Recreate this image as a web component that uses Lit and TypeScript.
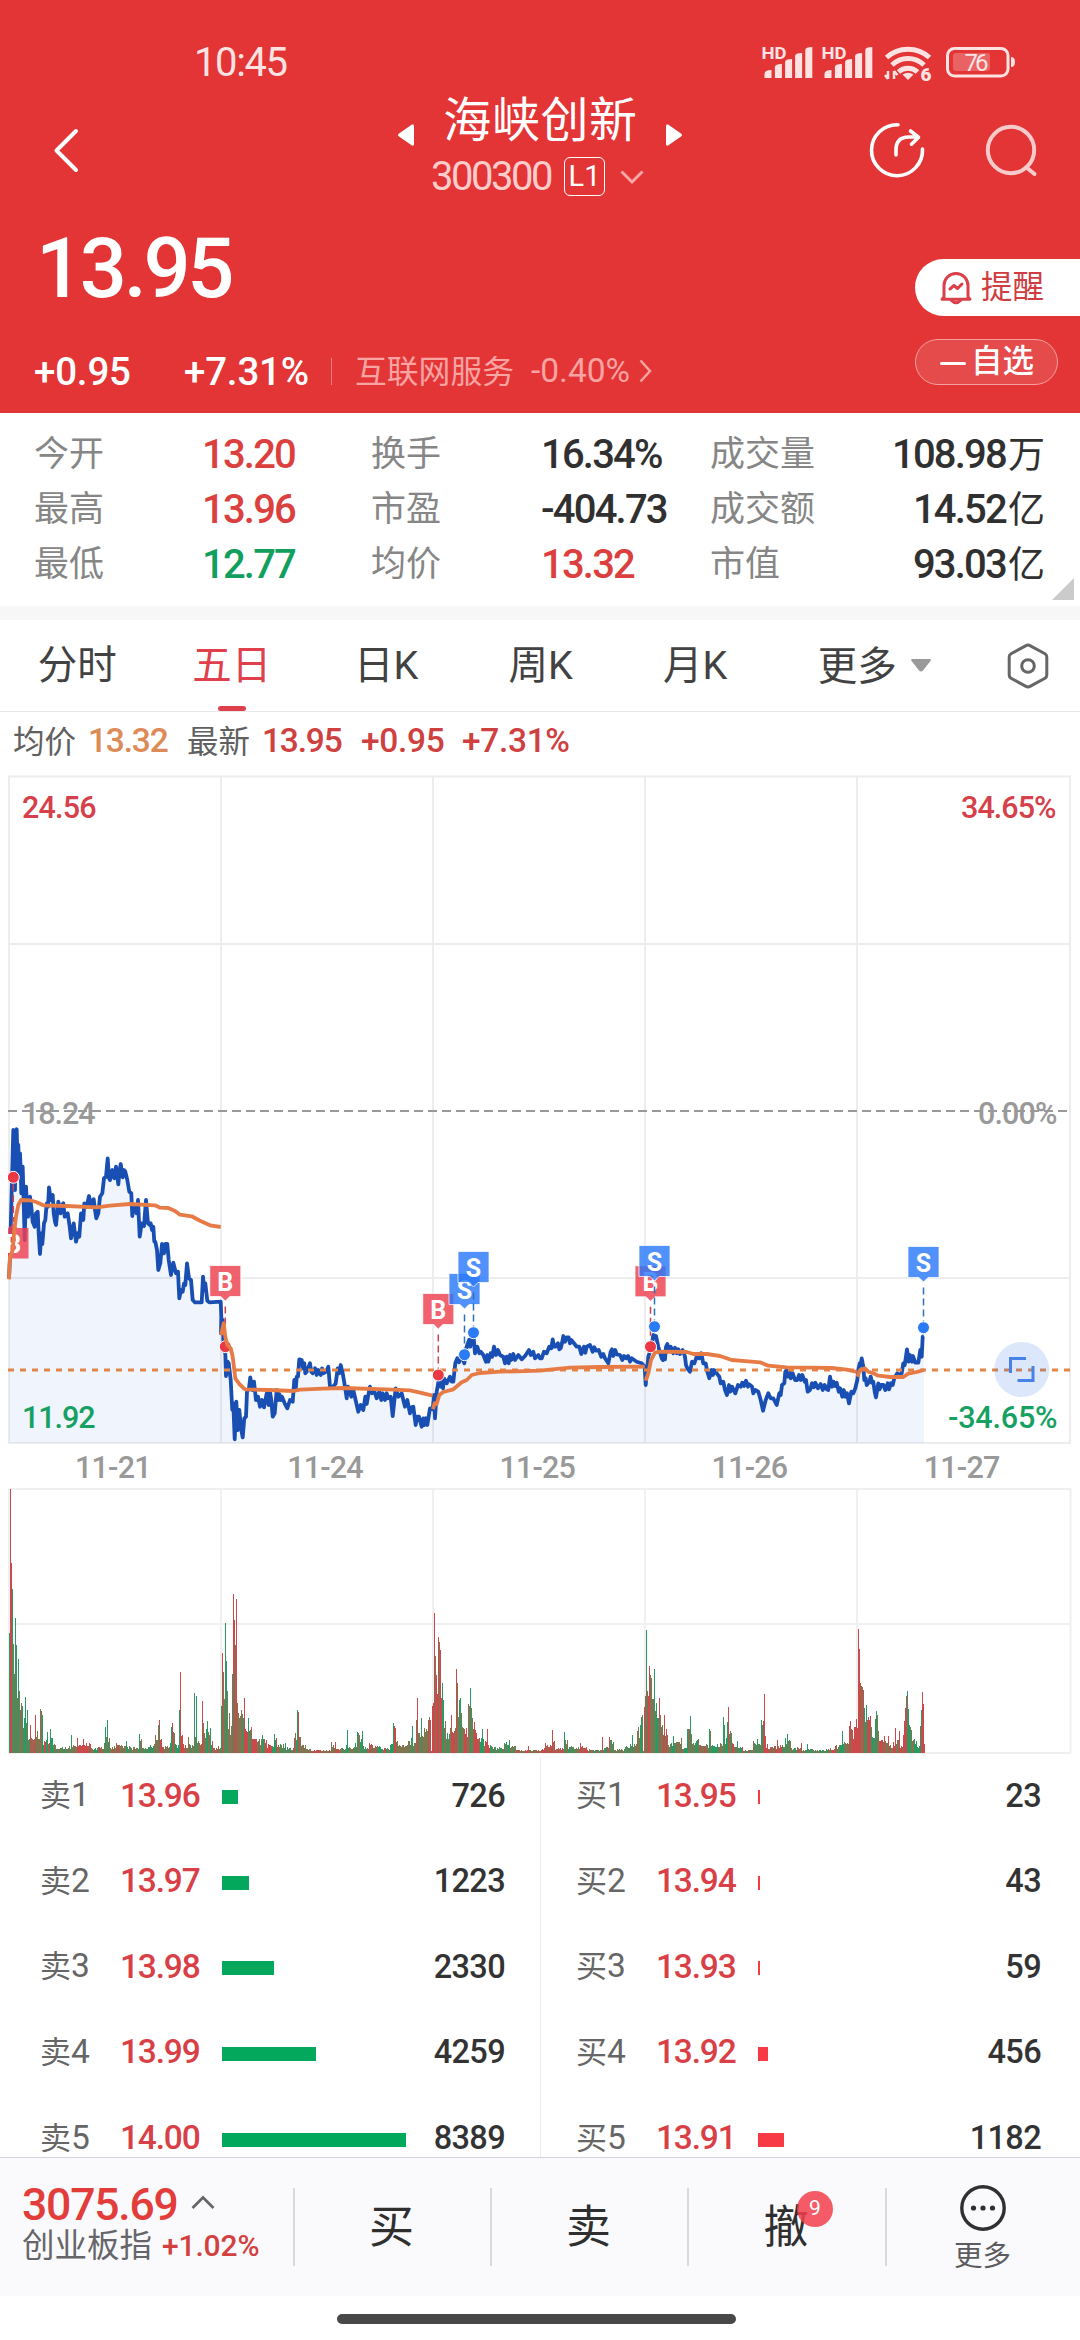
import { LitElement, html, svg, css } from "lit";
import { customElement } from "lit/decorators.js";

type Tone = "up" | "down" | "flat";

const STATS: [string, string, Tone][][] = [
  [["今开", "13.20", "up"], ["换手", "16.34%", "flat"], ["成交量", "108.98万", "flat"]],
  [["最高", "13.96", "up"], ["市盈", "-404.73", "flat"], ["成交额", "14.52亿", "flat"]],
  [["最低", "12.77", "down"], ["均价", "13.32", "up"], ["市值", "93.03亿", "flat"]],
];

const ASKS: [string, string, string, number][] = [
  ["卖1", "13.96", "726", 16],
  ["卖2", "13.97", "1223", 27],
  ["卖3", "13.98", "2330", 52],
  ["卖4", "13.99", "4259", 94],
  ["卖5", "14.00", "8389", 184],
];
const BIDS: [string, string, string, number][] = [
  ["买1", "13.95", "23", 2],
  ["买2", "13.94", "43", 2],
  ["买3", "13.93", "59", 2],
  ["买4", "13.92", "456", 10],
  ["买5", "13.91", "1182", 26],
];

// Curve samples are stored in thirds of a pixel, relative to an origin.
type Chunk = [number, number, string];
const toPoints = (chunks: Chunk[]) =>
  chunks
    .flatMap(([ox, oy, s]) =>
      s.trim().split(/\s+/).map((p) => {
        const [x, y] = p.split(",").map(Number);
        return `${(ox + x / 3).toFixed(1)},${(oy + y / 3).toFixed(1)}`;
      })
    )
    .join(" ");

const PRICE = toPoints([
  [0, 1090, `27,565 30,500 33,380 40,120 45,300 47,130 50,118 52,190 55,165 57,250 60,190 62,240 64,310 68,230 71,340 74,450 78,290 81,350 84,380 90,320 94,350 98,395 104,410 108,370 113,365 116,430 120,492 124,430 127,462 132,400 136,390 140,340 144,350 147,292 152,330 158,315 161,370 165,395 168,405 175,335 182,370 186,345 190,340 194,380 203,370 209,410 213,445 221,400 228,455 234,430 238,440 243,370 250,390 253,340 260,350 267,318 273,345 281,328 285,360 289,385 295,370 300,320 307,310 312,265 318,260 323,205 327,265 330,270 337,240 343,265 348,230 352,260 355,283 359,240 362,222 368,262 372,240 376,245 382,270 388,305 394,310 397,378 402,345 407,355 410,370 414,330 419,440 425,400 432,408 438,330 444,400 449,405 452,400 456,420 460,410 463,455 466,455 471,480 475,540 481,520 486,462 492,490 496,462 502,462 506,510 513,555 520,518 528,550 534,545 538,625 543,600 548,605 552,580 556,585 561,520 567,565 573,570 578,630 585,637 605,637 609,560 613,600 616,580 622,632 628,637 662,635 664,680 663,730 668,690 671,780 676,790 678,858 683,815 686,820 692,870 697,960 700,940 704,1048 709,935 713,1020 718,960 723,1015 728,1042 733,985 738,980 741,905 747,895 751,862 757,900 762,875 768,930 774,920 780,950 786,930 792,952 800,910 806,945`],
  [270, 1200, `0,575 4,600 8,650 14,640 20,570 24,600 28,582 32,600 36,590 44,610 52,625 60,600 68,605 73,540 77,570 80,530 84,530 88,478 95,480 99,505 103,490 106,520 110,515 120,490 124,515 128,520 135,505 140,525 145,510 152,525 156,505 160,520 168,515 175,500 180,560 190,560 197,550 203,505 208,520 212,495 218,520 225,560 230,595 234,560 238,570 244,590 250,570 258,605 265,635 272,615 280,630 286,590 290,612 294,590 300,560 306,580 312,570 320,595 328,575 334,600 338,580 345,600 350,580 355,595 362,590 368,648 377,565 385,590 395,580 400,600 405,620 412,600 420,640 425,622 430,620 437,675 441,650 447,650 455,680 460,655 463,675 468,655 472,675 480,625 488,628 492,585 495,655 500,575 508,530 512,560 515,540 519,565 522,535 530,550 540,530 545,545 550,545 556,490 562,475 567,487 572,465 583,490 590,440 597,420 601,440 605,410 610,400 615,460 622,440 628,460 632,455 640,465 648,485 652,465 655,485 662,460 667,470 672,440 678,465 684,450 690,465 700,470 705,490 710,470 716,490 720,465 724,480 730,462 735,480 745,465 755,478 765,468 777,450 782,465 790,455 795,475 805,465`],
  [540, 1200, `0,475 5,475 12,455 20,460 28,440 34,445 38,418 42,440 46,440 54,430 58,448 62,445 66,430 70,408 75,425 80,412 86,412 90,430 94,420 102,430 110,440 118,440 124,462 132,440 136,458 140,440 150,435 158,455 163,442 168,452 176,450 184,470 190,462 195,475 205,490 212,455 216,448 220,468 226,450 230,463 240,465 247,480 252,468 258,475 264,468 270,485 275,475 290,485 305,490 314,500 317,555 325,470 335,440 340,405 348,408 355,440 365,475 369,480 372,455 375,478 378,440 382,432 387,450 392,440 400,460 405,443 410,460 415,448 420,462 428,450 435,470 438,495 442,505 450,515 456,485 463,490 470,470 478,475 484,460 490,490 497,490 502,515 508,535 515,510 519,525 522,510 530,520 538,530 542,550 550,545 555,570 561,585 567,555 571,575 576,560 586,580 594,555 602,560 607,548 612,558 618,542 624,560 628,553 636,560 640,580 646,570 655,575 662,600 669,632 677,600 685,580 692,595 700,595 710,615 718,580 722,585 726,555 733,550 736,515 740,510 744,530 748,510 752,535 758,520 765,540 772,540 777,525 782,540 787,525 794,545 798,540 803,575`],
  [810, 1200, `0,570 6,550 11,562 16,548 24,565 32,552 38,570 44,555 50,568 55,570 60,530 66,560 70,545 76,558 80,548 86,575 90,565 97,590 101,570 106,590 111,580 117,610 124,575 130,580 136,565 142,540 145,510 149,490 152,495 155,475 160,500 163,540 167,535 170,555 178,545 182,530 186,548 190,545 194,575 198,592 205,550 209,568 213,555 220,555 226,570 233,550 237,568 243,550 248,555 253,535 262,520 268,525 275,520 280,490 284,495 287,475 291,448 296,485 300,465 306,485 309,468 316,488 325,488 331,450 335,470 338,410 342,408`],
]);

const AVERAGES = [
  toPoints([[0, 1090, `27,568 30,500 38,480 42,430 48,380 55,345 63,330 90,331 110,337 130,346 200,348 290,352 330,347 390,342 465,346 480,353 505,354 525,363 540,374 575,379 600,392 630,406 662,411`]]),
  toPoints([
    [0, 1090, `663,735 671,700 676,740 682,765 692,775 698,800 706,865 718,882 735,898 806,900`],
    [270, 1200, `0,570 70,573 90,569 160,566 220,564 370,569 420,571 460,580 488,587`],
  ]),
  toPoints([
    [270, 1200, `489,628 494,610 500,612 508,585 520,576 550,568 575,547 590,540 605,525 630,519 690,515 740,514`],
    [540, 1200, `0,512 90,503 180,501 314,500`],
  ]),
  toPoints([
    [540, 1200, `317,542 325,520 333,480 345,458 360,455 440,456 460,462 500,462 540,468 575,480 625,484 660,487 685,497 740,502`],
    [810, 1200, `0,503 65,504 110,509 140,516`],
  ]),
  toPoints([[810, 1200, `142,530 150,510 165,505 175,515 190,520 205,527 240,531 280,531 295,521 320,516 342,510`]]),
];

// x of the dot, y of the dot, top of the tag
const TRADES: ["B" | "S", number, number, number][] = [
  ["B", 225.3, 1346.7, 1265.5],
  ["B", 438.3, 1375, 1293.5],
  ["S", 464.5, 1354.7, 1273.5],
  ["S", 473.5, 1332.7, 1251.5],
  ["B", 650.5, 1346.7, 1265.8],
  ["S", 654.5, 1326.7, 1245.5],
  ["S", 923.5, 1327.7, 1246.5],
];

// Volume samples: x:height, an r or g suffix marks a purely red or green bar.
const VOLUME = `9:120g 10:264r 11:190r 12:164g 13:109 14:79 15:135g 16:108g 17:55 18:94g 19:62 20:43 22:47g 24:35g 25:56g 26:30 27:43g 29:14 30:28r 32:14 35:38r 37:22 38:14 40:44 41:42 42:38g 44:12r 47:21g 49:10r 50:24g 52:15g 55:8 60:5g 65:6 71:18g 73:8 77:15r 80:8r 83:14r 86:10r 90:9r 95:5g 100:5r 104:10 105:26g 107:33g 109:15 112:6 116:10r 120:7 126:12g 130:6g 137:5 139:19g 141:14 145:5g 150:8g 155:18 158:28g 159:33r 161:14r 165:7 170:10g 171:26g 172:30r 174:20 178:8g 179:43g 180:81r 182:18r 185:8r 188:16 190:8g 194:60g 195:16 196:57g 198:12 201:9r 202:52r 203:30 204:20 207:32g 209:18 210:25g 212:12r 214:5r 218:7r
221:47g 222:100r 223:81 224:54 225:130g 226:92g 227:62 229:40 231:27 232:79g 233:159r 234:133r 235:108 236:154r 237:50 239:35 241:43 243:35g 244:55r 246:22r 248:35g 251:26r 254:14r 258:12r 262:18g 266:13r 270:8r 274:19g 276:15r 278:8 285:10g 290:5g 294:15r 295:20 297:43g 298:41r 300:16 305:8 310:4 320:3r 331:11 333:8 335:11r 340:4 346:8g 347:23g 349:6 355:10g 357:21g 359:18 362:22g 365:6g 369:10r 372:8r 380:6g 385:5r 390:8g 393:30g 395:25r 397:12 402:8 408:12 411:15g 412:27g 415:10 416:33 417:55r 419:20 421:35g 424:25 428:33r 430:33r 431:2r
432:47r 433:50r 434:140r 435:97 436:78r 437:59r 438:116r 439:111 440:103r 441:55r 442:70g 443:53g 445:32 447:20g 450:25 451:38r 453:20r 455:25 456:84r 457:70 459:53g 460:55g 461:40 463:25 466:25r 468:49 469:47 470:65g 471:45 472:35 474:31r 476:20r 479:15r 482:24g 485:12r 487:24r 490:8g 495:6 500:5g 504:10g 509:13g 515:7 525:3r 528:7r 535:3 542:4r 545:10r 551:7r 552:23r 554:12r 560:5r 564:21g 567:13 572:6g 580:10r 586:6r 595:3g 602:16r 605:5g 609:16r 611:13g 613:11g 617:4 625:6g 630:9g 632:18g 634:9 637:22 640:28g 641:36g 642:38 643:2
644:46r 645:57 646:123g 647:62r 648:57r 649:87r 650:78 651:75 652:54 653:54 654:84g 655:42 656:50g 658:35g 659:55r 660:38 662:28 664:38r 666:24r 667:18 671:10g 673:17g 675:10 677:11 681:15 684:5g 687:24g 688:24 689:24 690:37g 691:19 693:10 696:12g 698:14 700:8r 706:9 709:24g 710:22 713:7g 717:9g 720:10 723:36g 724:28g 726:15g 727:31g 728:46r 729:19 731:20g 733:9r 735:6 737:12g 742:6r 750:3g 753:12 757:14g 759:9g 761:33g 762:28g 763:32r 764:59r 765:17r 767:9r 770:6 777:13r 780:8r 785:15g 787:19g 790:12 795:5g 801:10r 803:3g 807:9g 812:4 820:3g 828:4r 835:7r 840:8g 842:22g 844:11 847:10 849:27r 850:32r 852:23r 855:26r
856:34r 857:25r 858:124r 859:104r 860:70r 861:67 862:66 863:63r 864:45g 865:31 866:48g 868:36r 870:37r 871:26g 873:15g 875:34g 876:42g 877:38 878:22 880:12r 884:17r 886:10 888:17r 890:8 893:11r 895:25r 897:13 899:22r 901:7r 903:18r 904:32r 905:45r 906:57r 907:62g 908:44g 909:28g 911:23g 913:13 916:12g 919:7g 920:27r 921:43g 922:61r 923:49r 924:9r`;

const VOLUME_COLORS: Record<string, string> = { r: "#cb484b", g: "#2b9a62", m: "#7f7550" };

const buildVolume = () => {
  const anchors = VOLUME.trim().split(/\s+/).map((s) => {
    const m = /^(\d+):(\d+)([rg]?)$/.exec(s)!;
    return { x: +m[1], h: +m[2], c: m[3] || "m" };
  });
  let seed = 7;
  const rand = () => (seed = (seed * 16807) % 2147483647) / 2147483647;
  const paths: Record<string, string> = { r: "", g: "", m: "" };
  const bar = (x: number, h: number, c: string) => {
    paths[c] += `M${x} ${(1753 - h).toFixed(1)}h1V1753h-1z`;
  };
  anchors.forEach((a, i) => {
    bar(a.x, a.h, a.c);
    const next = anchors[i + 1];
    if (!next) return;
    for (let x = a.x + 1; x < next.x; x++) {
      const low = Math.min(a.h, next.h, 60);
      const roll = rand();
      bar(x, Math.max(2, low * (0.6 + rand() * 0.6)), roll < 0.45 ? "m" : roll < 0.75 ? a.c : next.c);
    }
  });
  return paths;
};
const VOLUME_PATHS = buildVolume();

@customElement("app-root")
export class AppRoot extends LitElement {
  static styles = css`
    :host {
      display: flex;
      flex-direction: column;
      width: 1080px;
      height: 2340px;
      overflow: hidden;
      background: #fff;
      color: #333;
      font-family: Roboto, "Noto Sans CJK SC", sans-serif;
    }
    * { box-sizing: border-box; }
    svg { display: block; flex: none; }
    .num { font-weight: 500; letter-spacing: -0.035em; }
    .up { color: #db3f3e; }
    .down { color: #129f5e; }
    .flat { color: #303030; }

    .header {
      height: 413px;
      flex: none;
      background: #e33536;
      color: #fff;
      display: flex;
      flex-direction: column;
    }
    .status {
      height: 88px;
      display: flex;
      align-items: flex-start;
      justify-content: space-between;
      padding: 40px 61px 0 194px;
    }
    .clock { font-size: 40px; line-height: 46px; color: #ffe3e3; letter-spacing: -1.4px; }
    .nav {
      height: 124px;
      display: grid;
      grid-template-columns: 398px 284px 398px;
    }
    .back { padding: 38px 0 0 51px; }
    .tools { display: flex; gap: 58px; padding: 32px 0 0 186px; }
    .title-row { display: flex; align-items: center; justify-content: space-between; height: 60px; }
    .title { font-size: 48px; line-height: 60px; letter-spacing: 0.6px; padding: 5px 0 0 1px; }
    .arrow { padding-top: 34px; }
    .code-row { display: flex; align-items: center; padding: 1px 0 0 33px; height: 56px; color: #ffcccc; }
    .code { font-size: 40px; line-height: 46px; letter-spacing: -2.5px; width: 133px; }
    .level {
      width: 41px;
      height: 39px;
      border: 1.5px solid #fff;
      border-radius: 6px;
      color: #fff;
      font-size: 29px;
      line-height: 36px;
      text-align: center;
      margin-right: 15px;
    }
    .quote { display: flex; justify-content: space-between; flex: 1; }
    .quote-left { display: flex; flex-direction: column; padding-left: 34px; }
    .price { font-size: 83px; line-height: 100px; padding: 7px 0 0 2px; letter-spacing: -0.04em; }
    .changes { display: flex; align-items: center; height: 60px; margin-top: 22px; }
    .delta { font-size: 38.5px; width: 150px; white-space: nowrap; letter-spacing: -0.005em; }
    .delta.pct { width: 147px; }
    .bar-sep { width: 1px; height: 27px; background: #f08080; margin-right: 23px; }
    .sector { font-size: 31.8px; color: #f9a3a3; width: 176px; white-space: nowrap; padding-bottom: 5px; }
    .sector-pct { font-size: 33.5px; color: #f9a3a3; width: 108px; letter-spacing: 0; padding-bottom: 1px; }
    .quote-right { display: flex; flex-direction: column; align-items: flex-start; width: 165px; padding-top: 47px; gap: 23px; }
    .remind {
      width: 165px;
      height: 57px;
      background: #fff;
      border-radius: 29px 0 0 29px;
      color: #cf3d42;
      font-size: 31.5px;
      line-height: 57px;
      display: flex;
      align-items: center;
      padding-left: 25px;
      gap: 9px;
    }
    .watch {
      width: 143px;
      height: 46px;
      border: 1px solid #f4a0a0;
      border-radius: 23px;
      background: #e64b4c;
      font-size: 31.5px;
      line-height: 43px;
      font-weight: 500;
      display: flex;
      padding-left: 24px;
      gap: 5px;
    }
    .minus { width: 26px; height: 3px; border-radius: 2px; background: #fff; margin-top: 22px; }

    .stats {
      position: relative;
      height: 193px;
      flex: none;
      padding: 14px 0 0 34px;
      display: grid;
      grid-template-columns: 168px 169px 170px 169px 335px;
      grid-template-rows: repeat(3, 55px);
      line-height: 55px;
    }
    .label { color: #868686; font-size: 35px; }
    .value { font-size: 40px; white-space: nowrap; }
    .value.num { letter-spacing: -0.045em; }
    .value.end { grid-column: 5; }
    .unit { font-size: 37px; font-weight: 400; letter-spacing: 0; padding-left: 2px; }
    .fold { position: absolute; right: 6px; bottom: 6px; }
    .stat-end { display: flex; justify-content: space-between; }

    .band { height: 14px; background: #f7f7f7; flex: none; }

    .tabs { height: 92px; flex: none; display: flex; border-bottom: 1.5px solid #e8e8e8; color: #424242; font-size: 39.5px; }
    .tab { width: 154.7px; display: flex; flex-direction: column; align-items: center; line-height: 86px; white-space: nowrap; }
    .tab span { height: 86px; padding-top: 3px; }
    .tab.active { color: #df404b; }
    .mark { width: 28px; height: 5px; border-radius: 3px; background: #df404b; }
    .tab.more { width: 204px; flex-direction: row; align-items: center; justify-content: center; gap: 14px; }
    .tab.more span { padding-top: 1px; }
    .tab.gear { width: 104px; flex-direction: row; justify-content: center; height: 91px; }

    .legend { height: 60px; flex: none; display: flex; align-items: center; padding: 0 0 3px 13px; font-size: 31.5px; color: #606060; }
    .legend .num { font-size: 33.5px; color: #cf4040; white-space: nowrap; }
    .legend .l1, .legend .l2 { width: 75px; padding-bottom: 4px; }
    .legend .n1 { width: 99px; color: #dc8a58; }
    .legend .n2 { width: 99px; }
    .legend .n3 { width: 101px; }
    .legend .wide { letter-spacing: -0.01em; }

    .axis { font-size: 30.5px; font-weight: 500; letter-spacing: -0.5px; }
    .tag { font-size: 25px; font-weight: 700; fill: #fff; text-anchor: middle; }

    .book { flex: 1; min-height: 0; display: grid; grid-template-columns: 540px 540px; overflow: hidden; }
    .side { display: flex; flex-direction: column; }
    .side.bids { border-left: 1.5px solid #ececec; }
    .level-row { height: 85.6px; flex: none; display: flex; align-items: center; line-height: 36px; }
    .asks .level-row { padding: 0 35px 0 40px; }
    .bids .level-row { padding: 0 39px 0 35px; }
    .side .level-row:first-child { height: 81.5px; padding-bottom: 4.5px; }
    .lv { font-size: 31px; color: #666; width: 80px; white-space: nowrap; }
    .lv b { font-weight: 400; font-size: 33.5px; }
    .px { font-size: 33.5px; color: #d93f46; width: 102px; }
    .depth { height: 14px; background: #03a85c; margin-top: 3px; }
    .bids .depth { background: #f73a44; }
    .qty { margin-left: auto; font-size: 32.5px; letter-spacing: -0.02em; }

    .dock {
      height: 139px;
      flex: none;
      background: #fafafc;
      border-top: 1.5px solid #d4d4d8;
      display: grid;
      grid-template-columns: 293px 197px 197px 198px 195px;
    }
    .index { padding: 22px 0 0 22px; }
    .index-top { display: flex; align-items: center; height: 50px; gap: 13px; }
    .index-value { font-size: 44.5px; line-height: 50px; color: #e23d3a; letter-spacing: -0.027em; }
    .index-bottom { display: flex; align-items: center; height: 32px; line-height: 28px; gap: 10px; font-size: 32.5px; color: #66666a; white-space: nowrap; }
    .index-bottom .num { font-size: 30px; color: #d2413f; letter-spacing: -0.005em; }
    .action { position: relative; display: flex; justify-content: center; font-size: 45px; line-height: 140px; color: #2f2f2f; }
    .action::before { content: ""; position: absolute; left: 0; top: 30px; width: 2px; height: 78px; background: #d9d9dd; }
    .action.last { flex-direction: column; align-items: center; justify-content: flex-start; padding-top: 26px; gap: 6px; font-size: 28.5px; line-height: 37px; color: #5c5c5e; }
    .badge {
      position: absolute;
      left: 110px;
      top: 33px;
      width: 36px;
      height: 36px;
      border-radius: 50%;
      background: rgba(243, 62, 76, 0.85);
      color: #fff;
      font-size: 21px;
      line-height: 35px;
      text-align: center;
    }
    .home { height: 44px; flex: none; display: flex; justify-content: center; align-items: flex-start; padding: 18px 7px 0 0; }
    .pill { width: 399px; height: 10px; border-radius: 5px; background: #484848; }
  `;

  private signal(x: number) {
    return svg`
      <text x=${x - 3} y="58.500" font-size="16" font-weight="700" textLength="25" lengthAdjust="spacingAndGlyphs">HD</text>
      <path d=${`M${x} 78v-4q0-4 7-4v8zM${x + 10.4} 78V67q0-3 7-3v14zM${x + 20.6} 78V62q0-3 7-3v19zM${x + 30.6} 78V56q0-3 7-3v25zM${x + 40.8} 78V50q0-3 7-3v31z`}></path>`;
  }

  private statusIcons() {
    return html`<svg width="259" height="44" viewBox="760 40 259 44" fill="#ffe3e3">
      ${this.signal(764.5)} ${this.signal(824.5)}
      <g fill="none" stroke="#ffe3e3" stroke-width="5">
        <path d="M886.5 57.5a32 32 0 0 1 43 0"></path>
        <path d="M892 65a23 23 0 0 1 32 0"></path>
        <path d="M898.5 72a14 14 0 0 1 19 0"></path>
      </g>
      <path d="M902.5 74.5q5.500-3.500 11 0L908 80z"></path>
      <path d="M888 71v8m0 0l-3-4m9 4v-8m0 0l3.500 4" stroke="#ffe3e3" stroke-width="2.500" fill="none"></path>
      <text x="920.5" y="81" font-size="19" font-weight="900">6</text>
      <rect x="947.5" y="48.500" width="60.500" height="27.500" rx="7" fill="none" stroke="#ffe3e3" stroke-width="3"></rect>
      <path d="M1011 57q4 0 4 5t-4 5z"></path>
      <rect x="953" y="53" width="37" height="18" rx="3" opacity=".27"></rect>
      <text x="964.500" y="71" font-size="24" textLength="24">76</text>
    </svg>`;
  }

  private header() {
    return html`<header class="header">
      <div class="status"><span class="clock">10:45</span>${this.statusIcons()}</div>
      <div class="nav">
        <div class="back">
          <svg width="30" height="48" viewBox="0 0 30 48" fill="none" stroke="#fff" stroke-width="4" stroke-linecap="round" stroke-linejoin="round"><path d="M25 5L5.500 24.500L25 44"></path></svg>
        </div>
        <div>
          <div class="title-row">
            <svg class="arrow" width="16" height="56" viewBox="0 0 16 22"><path d="M16 1.500V20.500Q16 22 14 21.500L1 12.500Q-1 11 1 9.500L14 .5Q16 0 16 1.500z" fill="#fff"></path></svg>
            <span class="title">海峡创新</span>
            <svg class="arrow" width="16" height="56" viewBox="0 0 16 22"><path d="M0 1.500V20.500Q0 22 2 21.500L15 12.500Q17 11 15 9.500L2 .5Q0 0 0 1.500z" fill="#fff"></path></svg>
          </div>
          <div class="code-row">
            <span class="code">300300</span><span class="level">L1</span>
            <svg width="24" height="16" viewBox="0 0 24 16" fill="none" stroke="#f7a6a6" stroke-width="3"><path d="M1.500 2.500L12 13L22.500 2.500"></path></svg>
          </div>
        </div>
        <div class="tools">
          <svg width="58" height="60" viewBox="868 120 58 60" fill="none" stroke="#fff" stroke-width="3.600" stroke-linecap="round" stroke-linejoin="round">
            <path d="M898 124.700A25.500 25.500 0 1 0 922.500 149"></path>
            <path d="M896 155v-5q0-13 13-13h9M910.500 131l8 6.200l-7 7"></path>
          </svg>
          <svg width="56" height="60" viewBox="982 120 56 60" fill="none" stroke="#f7cbcb" stroke-width="4" stroke-linecap="round">
            <circle cx="1009" cy="150" r="23.200"></circle><path d="M1024.500 167.500l8 6.500"></path>
          </svg>
        </div>
      </div>
      <div class="quote">
        <div class="quote-left">
          <div class="price num">13.95</div>
          <div class="changes">
            <span class="delta num">+0.95</span><span class="delta pct num">+7.31%</span>
            <i class="bar-sep"></i>
            <span class="sector">互联网服务</span><span class="sector-pct">-0.40%</span>
            <svg width="13" height="24" viewBox="0 0 13 24" fill="none" stroke="#f9a3a3" stroke-width="2.500"><path d="M1.500 1.500L11 12L1.500 22.500"></path></svg>
          </div>
        </div>
        <div class="quote-right">
          <div class="remind">
            <svg width="32" height="34" viewBox="0 0 32 34" fill="none" stroke="#d9404a" stroke-width="3" stroke-linejoin="round" stroke-linecap="round">
              <path d="M4 26V14.500a12 12 0 0 1 24 0V26l2 2.200H2z"></path>
              <path d="M10 18l4-3.500l3.500 3l4.500-4.500"></path>
              <path d="M11.500 29.500q4.500 4.500 9 0"></path>
            </svg>提醒
          </div>
          <div class="watch"><i class="minus"></i>自选</div>
        </div>
      </div>
    </header>`;
  }

  private stats() {
    return html`<section class="stats">
      ${STATS.map((row) => row.map(([label, value, tone], i) => {
        if (i < 2) return html`<span class="label">${label}</span><span class="value num ${tone}">${value}</span>`;
        return html`<div class="value end stat-end"><span class="label">${label}</span><span class="value num ${tone}">${value.slice(0, -1)}<span class="unit">${value.slice(-1)}</span></span></div>`;
      }))}
      <svg class="fold" width="22" height="22" viewBox="0 0 22 22"><path d="M22 0V22H0z" fill="#cbcbcb"></path></svg>
    </section>`;
  }

  private tabs() {
    return html`<nav class="tabs">
      <div class="tab"><span>分时</span></div>
      <div class="tab active"><span>五日</span><i class="mark"></i></div>
      <div class="tab"><span>日K</span></div>
      <div class="tab"><span>周K</span></div>
      <div class="tab"><span>月K</span></div>
      <div class="tab more"><span>更多</span><svg width="20" height="13" viewBox="0 0 20 13"><path d="M1 0H19Q20.500.5 19.500 2L12 11.500Q10 13.500 8 11.500L.5 2Q-.5.5 1 0z" fill="#9a9a9a"></path></svg></div>
      <div class="tab gear">
        <svg width="42" height="46" viewBox="0 0 42 46" fill="none" stroke="#666" stroke-width="3" stroke-linejoin="round">
          <path d="M19 2.600Q21 1.500 23 2.600L38 10.800Q39.800 12 39.800 14V32Q39.800 34 38 35.200L23 43.400Q21 44.500 19 43.400L4 35.200Q2.200 34 2.200 32V14Q2.200 12 4 10.800z"></path>
          <circle cx="21" cy="23" r="6.300"></circle>
        </svg>
      </div>
    </nav>`;
  }

  private legend() {
    return html`<div class="legend">
      <span class="l1">均价</span><span class="num n1">13.32</span>
      <span class="l2">最新</span><span class="num n2">13.95</span><span class="num n3 wide">+0.95</span><span class="num wide">+7.31%</span>
    </div>`;
  }

  private trade([side, x, y, top]: ["B" | "S", number, number, number]) {
    const buy = side === "B";
    const main = buy ? "#ea3845" : "#2a7bf4";
    const line = buy ? "#c8434c" : "#2d72b8";
    return svg`
      <line x1=${x} x2=${x} y1=${top + 41} y2=${y - 6} stroke=${line} stroke-width="1.500" stroke-dasharray="7 4"></line>
      <circle cx=${x} cy=${y} r="6" fill=${main} stroke="#fff" stroke-width="1"></circle>
      <path d=${`M${x - 15.5} ${top}h31v31h-11l-4.500 4.500l-4.500-4.500h-11z`} fill=${buy ? "#ee404f" : "#2b79fb"} fill-opacity=".82" stroke="#fff" stroke-opacity=".75" stroke-width="1"></path>
      <text class="tag" x=${x} y=${top + 25}>${side}</text>`;
  }

  private priceChart() {
    return html`<svg width="1080" height="712" viewBox="0 772 1080 712">
      <g stroke="#ededef" stroke-width="2" fill="none">
        <rect x="9" y="776.500" width="1061" height="666.500"></rect>
        <path d="M221 777V1443M433 777V1443M645 777V1443M857 777V1443M9 944H1070M9 1278H1070"></path>
      </g>
      <polygon points=${`9,1443 ${PRICE} 924,1443`} fill="#4080e8" fill-opacity=".085"></polygon>
      <line x1="8" x2="1070" y1="1111" y2="1111" stroke="#999" stroke-width="2" stroke-dasharray="9 5"></line>
      <g class="axis">
        <text x="22" y="817.500" fill="#d5404a" textLength="74">24.56</text>
        <text x="961" y="817.500" fill="#d5404a" textLength="95">34.65%</text>
        <text x="22" y="1124" fill="#999" textLength="73">18.24</text>
        <text x="978" y="1124" fill="#999" textLength="79">0.00%</text>
      </g>
      <polyline points=${PRICE} fill="none" stroke="#194fb3" stroke-width="3.800" stroke-linejoin="round"></polyline>
      <line x1="8" x2="1070" y1="1370" y2="1370" stroke="#e28547" stroke-width="3" stroke-dasharray="6 6"></line>
      <g class="axis">
        <text x="22" y="1428" fill="#16a062" textLength="73">11.92</text>
        <text x="948" y="1428" fill="#16a062" textLength="109">-34.65%</text>
      </g>
      <clipPath id="plot"><rect x="8" y="776" width="1063" height="668"></rect></clipPath>
      <g clip-path="url(#plot)">
        <line x1="13.300" x2="13.300" y1="1184" y2="1222" stroke="#c8434c" stroke-width="1.500" stroke-dasharray="7 4"></line>
        <circle cx="13.300" cy="1177.300" r="6" fill="#ea3845" stroke="#fff" stroke-width="1"></circle>
        <path d="M-2 1228h10.500l4.500-4.500l4.500 4.500h11v30.500h-31z" fill="#ee404f" fill-opacity=".82"></path>
        <text class="tag" x="13.300" y="1252.500">B</text>
      </g>
      ${TRADES.map((t) => this.trade(t))}
      ${AVERAGES.map((p) => svg`<polyline points=${p} fill="none" stroke="#e67b46" stroke-width="3.800" stroke-linejoin="round"></polyline>`)}
      <circle cx="1021.700" cy="1369.500" r="27.500" fill="#3f78ea" fill-opacity=".18"></circle>
      <path d="M1010.500 1373V1358.500H1026M1033 1366V1380.500H1017.500" fill="none" stroke="#4782e6" stroke-width="3"></path>
      <g class="axis" fill="#999">
        ${["11-21", "11-24", "11-25", "11-26", "11-27"].map((d, i) => svg`<text x=${75 + i * 212.2} y="1478" textLength="76">${d}</text>`)}
      </g>
    </svg>`;
  }

  private volumeChart() {
    return html`<svg width="1080" height="273" viewBox="0 1484 1080 273">
      <g stroke="#f0f0f1" stroke-width="2" fill="none">
        <path d="M9 1489H1071M9 1624H1071M9 1753H1071M9 1489V1753M221 1489V1753M433 1489V1753M645 1489V1753M857 1489V1753M1070.500 1489V1753"></path>
      </g>
      ${["m", "g", "r"].map((k) => svg`<path d=${VOLUME_PATHS[k]} fill=${VOLUME_COLORS[k]} shape-rendering="crispEdges"></path>`)}
    </svg>`;
  }

  private side(name: string, rows: [string, string, string, number][]) {
    return html`<div class="side ${name}">
      ${rows.map(([label, price, qty, width]) => html`<div class="level-row">
        <span class="lv">${label[0]}<b>${label[1]}</b></span>
        <span class="px num">${price}</span>
        <i class="depth" style="width:${width}px"></i>
        <span class="qty num">${qty}</span>
      </div>`)}
    </div>`;
  }

  private dock() {
    return html`<footer class="dock">
      <div class="index">
        <div class="index-top">
          <span class="index-value num">3075.69</span>
          <svg width="24" height="22" viewBox="0 0 24 22" fill="none" stroke="#666" stroke-width="2.800"><path d="M1.500 14L12 3.500L22.500 14"></path></svg>
        </div>
        <div class="index-bottom">创业板指<span class="num">+1.02%</span></div>
      </div>
      <div class="action">买</div>
      <div class="action">卖</div>
      <div class="action">撤<span class="badge">9</span></div>
      <div class="action last">
        <svg width="48" height="48" viewBox="0 0 48 48"><circle cx="24" cy="24" r="21.200" fill="none" stroke="#303030" stroke-width="3.400"></circle><g fill="#303030"><circle cx="14.500" cy="24" r="2.600"></circle><circle cx="24" cy="24" r="2.600"></circle><circle cx="33.500" cy="24" r="2.600"></circle></g></svg>
        更多
      </div>
    </footer>`;
  }

  render() {
    return html`
      ${this.header()} ${this.stats()}
      <div class="band"></div>
      ${this.tabs()} ${this.legend()} ${this.priceChart()} ${this.volumeChart()}
      <section class="book">${this.side("asks", ASKS)}${this.side("bids", BIDS)}</section>
      ${this.dock()}
      <div class="home"><div class="pill"></div></div>
    `;
  }
}
